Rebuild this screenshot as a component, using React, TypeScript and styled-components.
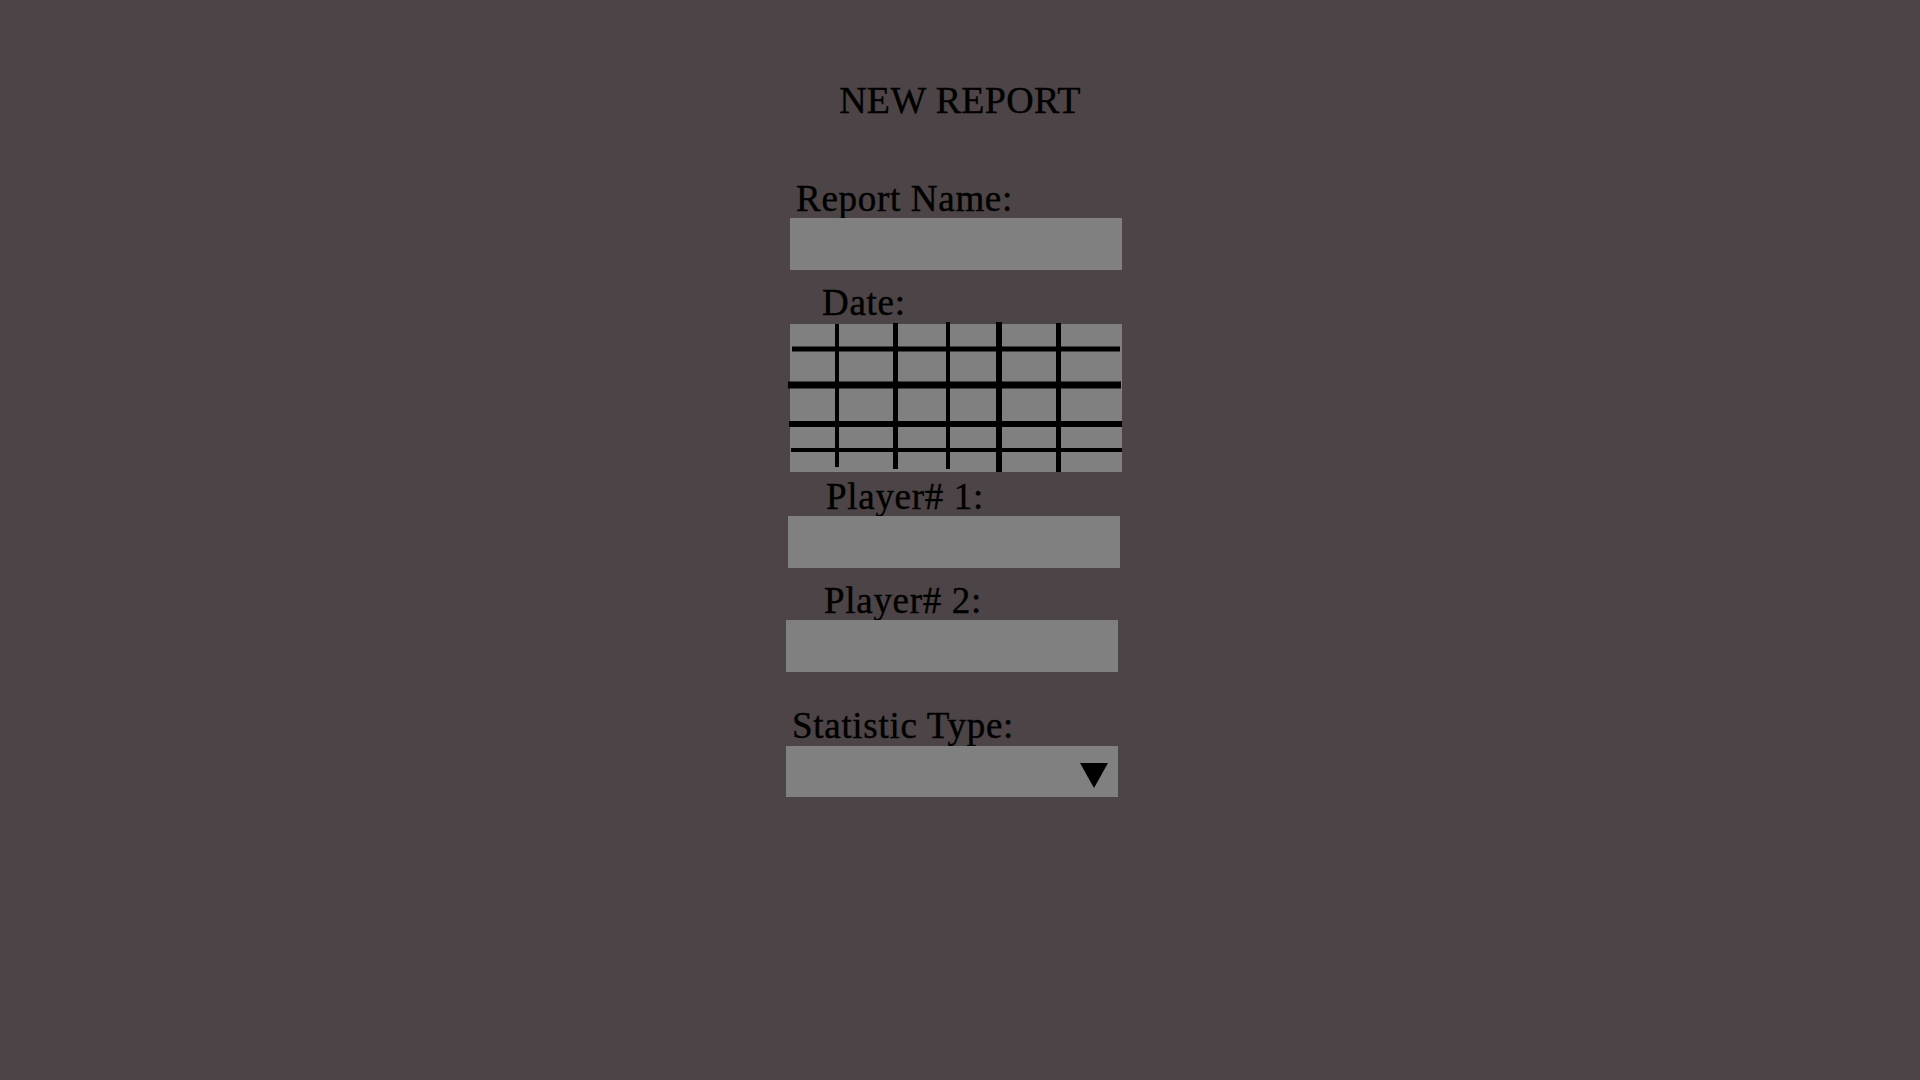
import React from "react";
import styled, { createGlobalStyle } from "styled-components";

const GlobalStyle = createGlobalStyle`
  html, body {
    margin: 0;
    padding: 0;
    background: #4c4446;
  }
  body {
    font-family: "Liberation Serif", "Times New Roman", serif;
    color: #000;
  }
`;

const Page = styled.main`
  min-height: 1080px;
  display: flex;
  flex-direction: column;
  align-items: center;
  padding-top: 81px;
  box-sizing: border-box;
`;

const Title = styled.h1`
  margin: 0 0 61px;
  font-size: 38px;
  line-height: 38px;
  font-weight: 400;
  letter-spacing: 0.3px;
  -webkit-text-stroke: 0.35px #000;
  color: #000;
`;

const Form = styled.form`
  width: 336px;
  margin-right: 12px;
  display: flex;
  flex-direction: column;
  align-items: flex-start;
`;

const Label = styled.label<{ $indent: number; $top: number; $gap: number }>`
  display: block;
  margin: ${(p) => p.$top}px 0 ${(p) => p.$gap}px;
  padding-left: ${(p) => p.$indent}px;
  font-size: 37px;
  line-height: 37px;
  font-weight: 400;
  letter-spacing: 0.7px;
  -webkit-text-stroke: 0.4px #000;
  white-space: nowrap;
`;

const TextField = styled.input<{ $shift: number }>`
  display: block;
  box-sizing: border-box;
  width: 332px;
  height: 52px;
  margin: 0 0 0 ${(p) => p.$shift}px;
  padding: 0 10px;
  border: none;
  outline: none;
  background: #808080;
  font-family: inherit;
  font-size: 24px;
  color: #000;
`;

const Calendar = styled.div<{ $shift: number }>`
  width: 332px;
  height: 148px;
  margin-left: ${(p) => p.$shift}px;
  background: #808080;
  svg {
    display: block;
    overflow: visible;
  }
`;

const SelectBox = styled.div<{ $shift: number }>`
  box-sizing: border-box;
  width: 332px;
  height: 51px;
  margin-left: ${(p) => p.$shift}px;
  background: #808080;
  display: flex;
  align-items: center;
  justify-content: flex-end;
  padding: 8px 10px 0 0;
  cursor: pointer;
`;

const hLines = [
  { y: 25, t: 5, x1: 2, x2: 330 },
  { y: 61, t: 7, x1: -2, x2: 331 },
  { y: 100, t: 6, x1: -1, x2: 332 },
  { y: 126, t: 4, x1: 1, x2: 332 },
];

const vLines = [
  { x: 47, t: 4, y1: 0, y2: 143 },
  { x: 105.5, t: 5, y1: -1, y2: 145 },
  { x: 158, t: 4, y1: -2, y2: 145 },
  { x: 209, t: 6, y1: -2, y2: 148 },
  { x: 268.5, t: 5, y1: -1, y2: 148 },
];

export default function App() {
  return (
    <>
      <GlobalStyle />
      <Page>
        <Title>NEW REPORT</Title>
        <Form onSubmit={(e) => e.preventDefault()}>
          <Label $indent={10} $top={0} $gap={1} htmlFor="report-name">
            Report Name:
          </Label>
          <TextField id="report-name" $shift={4} />

          <Label $indent={36} $top={14} $gap={3}>
            Date:
          </Label>
          <Calendar $shift={4}>
            <svg width="332" height="148" viewBox="0 0 332 148">
              {hLines.map((l, i) => (
                <line key={`h${i}`} x1={l.x1} x2={l.x2} y1={l.y} y2={l.y} stroke="#000" strokeWidth={l.t} />
              ))}
              {vLines.map((l, i) => (
                <line key={`v${i}`} x1={l.x} x2={l.x} y1={l.y1} y2={l.y2} stroke="#000" strokeWidth={l.t} />
              ))}
            </svg>
          </Calendar>

          <Label $indent={40} $top={6} $gap={1} htmlFor="player-1">
            Player# 1:
          </Label>
          <TextField id="player-1" $shift={2} />

          <Label $indent={38} $top={14} $gap={1} htmlFor="player-2">
            Player# 2:
          </Label>
          <TextField id="player-2" $shift={0} />

          <Label $indent={6} $top={35} $gap={2}>
            Statistic Type:
          </Label>
          <SelectBox $shift={0} role="combobox" aria-label="Statistic Type">
            <svg width="28" height="25" viewBox="0 0 28 25">
              <polygon points="0,0 28,0 14,25" fill="#000" />
            </svg>
          </SelectBox>
        </Form>
      </Page>
    </>
  );
}
